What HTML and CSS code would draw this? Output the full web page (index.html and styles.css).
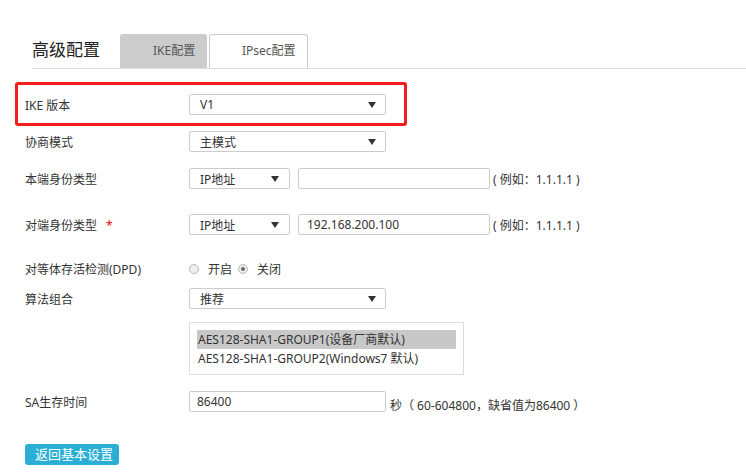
FILE: index.html
```html
<!DOCTYPE html>
<html lang="zh-CN">
<head>
<meta charset="utf-8">
<title>高级配置</title>
<link rel="stylesheet" href="styles.css">
</head>
<body>
<div class="header">
  <div class="title">高级配置</div>
  <div class="tab tab-active">IKE配置</div>
  <div class="tab tab-ipsec">IPsec配置</div>
</div>

<div class="form">
  <div class="highlight">
    <div class="row">
      <div class="label">IKE 版本</div>
      <div class="select sel-wide"><span>V1</span><svg class="arrow" width="8" height="6" viewBox="0 0 8 6"><path d="M0 0H8L4 6Z" fill="#333"/></svg></div>
    </div>
  </div>

  <div class="row r-mode">
    <div class="label">协商模式</div>
    <div class="select sel-wide"><span>主模式</span><svg class="arrow" width="8" height="6" viewBox="0 0 8 6"><path d="M0 0H8L4 6Z" fill="#333"/></svg></div>
  </div>

  <div class="row r-local">
    <div class="label">本端身份类型</div>
    <div class="select sel-small"><span>IP地址</span><svg class="arrow" width="8" height="6" viewBox="0 0 8 6"><path d="M0 0H8L4 6Z" fill="#333"/></svg></div>
    <div class="input in-id"></div>
    <div class="hint">( 例如：1.1.1.1 )</div>
  </div>

  <div class="row r-peer">
    <div class="label">对端身份类型<span class="star">*</span></div>
    <div class="select sel-small"><span>IP地址</span><svg class="arrow" width="8" height="6" viewBox="0 0 8 6"><path d="M0 0H8L4 6Z" fill="#333"/></svg></div>
    <div class="input in-id">192.168.200.100</div>
    <div class="hint">( 例如：1.1.1.1 )</div>
  </div>

  <div class="row r-dpd">
    <div class="label">对等体存活检测(DPD)</div>
    <div class="radios">
      <span class="radio"></span><span class="radio-text">开启</span>
      <span class="radio radio-on"></span><span class="radio-text">关闭</span>
    </div>
  </div>

  <div class="row r-algo">
    <div class="label">算法组合</div>
    <div class="select sel-wide"><span>推荐</span><svg class="arrow" width="8" height="6" viewBox="0 0 8 6"><path d="M0 0H8L4 6Z" fill="#333"/></svg></div>
  </div>

  <div class="row r-list">
    <div class="label"></div>
    <div class="listbox">
      <div class="item item-sel">AES128-SHA1-GROUP1(设备厂商默认)</div>
      <div class="item">AES128-SHA1-GROUP2(Windows7 默认)</div>
    </div>
  </div>

  <div class="row r-sa">
    <div class="label">SA生存时间</div>
    <div class="input in-sa">86400</div>
    <div class="hint hint-sa">秒（ 60-604800，缺省值为86400 ）</div>
  </div>

  <div class="btn">返回基本设置</div>
</div>
</body>
</html>
```
FILE: styles.css
```css
html, body {
  margin: 0;
  padding: 0;
  background: #fff;
}
body {
  font-family: "Noto Sans", "Noto Sans CJK SC", sans-serif;
  font-size: 12px;
  color: #333;
  width: 746px;
  height: 475px;
  overflow: hidden;
}
.header {
  display: flex;
  align-items: flex-end;
  margin-left: 32px;
  padding-top: 34px;
  border-bottom: 1px solid #ddd;
}
.title {
  font-size: 17px;
  color: #222;
  line-height: 34px;
  height: 34px;
  width: 88px;
  padding-bottom: 2px;
  box-sizing: border-box;
  display: flex;
  align-items: center;
}
.tab {
  height: 34px;
  box-sizing: border-box;
  line-height: 32px;
  padding-left: 32px;
  color: #555;
  border: 1px solid #ccc;
  border-bottom: none;
  border-radius: 3px 3px 0 0;
}
.tab-active {
  width: 87px;
  background: #ccc;
}
.tab-ipsec {
  width: 99px;
  margin-left: 2px;
  background: #fff;
}
.form {
  padding-left: 25px;
}
.highlight {
  margin-top: 13px;
  margin-left: -10px;
  width: 392px;
  height: 44px;
  box-sizing: border-box;
  border: 3px solid #f41d1d;
  border-radius: 3px;
  padding: 9px 0 0 7px;
}
.row {
  display: flex;
  align-items: center;
  height: 21px;
}
.label {
  width: 164px;
  flex: none;
  color: #333;
  white-space: nowrap;
}
.star {
  color: #f00;
  margin-left: 9px;
}
.select {
  height: 21px;
  box-sizing: border-box;
  border: 1px solid #ccc;
  border-radius: 2px;
  display: flex;
  align-items: center;
  justify-content: space-between;
  padding: 0 9px 0 10px;
  color: #333;
  background: #fff;
}
.sel-wide {
  width: 197px;
}
.sel-small {
  width: 101px;
  padding-right: 10px;
}
.arrow {
  display: block;
}
.input {
  height: 21px;
  box-sizing: border-box;
  border: 1px solid #ccc;
  border-radius: 2px;
  display: flex;
  align-items: center;
  padding-left: 8px;
  color: #333;
}
.in-id {
  width: 192px;
  margin-left: 8px;
}
.in-sa {
  width: 197px;
  padding-left: 7px;
}
.hint {
  margin-left: 3px;
  color: #333;
  white-space: nowrap;
}
.hint-sa {
  margin-left: 4px;
  padding-top: 6px;
}
.r-mode { margin-top: 5px; }
.r-local { margin-top: 16px; }
.r-peer { margin-top: 25px; }
.r-dpd { margin-top: 23px; }
.r-algo { margin-top: 9px; }
.r-list {
  margin-top: 13px;
  height: auto;
  align-items: flex-start;
}
.r-sa { margin-top: 16px; }
.radios {
  display: flex;
  align-items: center;
}
.radio {
  width: 10px;
  height: 10px;
  box-sizing: border-box;
  border: 1px solid #b8b8b8;
  border-radius: 50%;
  background: #eee;
  position: relative;
}
.radio-on::after {
  content: "";
  position: absolute;
  left: 2px;
  top: 2px;
  width: 4px;
  height: 4px;
  border-radius: 50%;
  background: #666;
}
.radio-text {
  margin-left: 9px;
  margin-right: 6px;
}
.listbox {
  width: 275px;
  height: 53px;
  box-sizing: border-box;
  border: 1px solid #ddd;
  padding: 7px 7px 5px;
}
.item {
  height: 19px;
  line-height: 19px;
  padding-left: 1px;
  white-space: nowrap;
  color: #333;
}
.item-sel {
  background: #c8c8c8;
}
.btn {
  margin-top: 32px;
  width: 94px;
  height: 21px;
  line-height: 21px;
  box-sizing: border-box;
  background: #2aaed3;
  color: #fff;
  font-size: 13px;
  border-radius: 3px;
  padding-left: 10px;
  white-space: nowrap;
}
```
